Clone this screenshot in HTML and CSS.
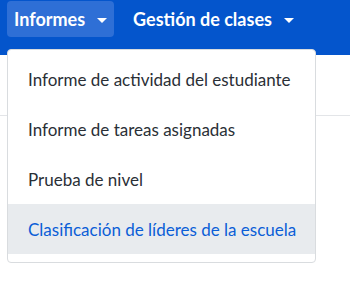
FILE: index.html
```html
<!DOCTYPE html>
<html lang="es">
<head>
    <meta charset="UTF-8">
    <meta name="viewport" content="width=device-width, initial-scale=1.0">
    <title>Informes</title>
    <link rel="stylesheet" href="styles.css">
</head>
<body>

    <!-- barra superior -->
    <nav class="topbar">
        <button class="nav-btn active">Informes <span class="caret"></span></button>
        <button class="nav-btn">Gestión de clases <span class="caret"></span></button>
    </nav>

    <!-- contenido de la página (tapado por el menú) -->
    <div class="page-head"></div>

    <!-- menú desplegable -->
    <ul class="dropdown">
        <li class="dropdown-item">Informe de actividad del estudiante</li>
        <li class="dropdown-item">Informe de tareas asignadas</li>
        <li class="dropdown-item">Prueba de nivel</li>
        <li class="dropdown-item selected">Clasificación de líderes de la escuela</li>
    </ul>

</body>
</html>
```

FILE: styles.css
```css
body {
    margin: 0;
    font-family: Lato, "Open Sans", sans-serif;
    background: white;
}

.topbar {
    height: 55px;
    background: #0455cc;
    display: flex;
    align-items: flex-start;
    padding: 1px 0 0 7px;
    gap: 12px;
    box-sizing: border-box;
}

.nav-btn {
    height: 36px;
    padding: 0 7px;
    display: flex;
    align-items: center;
    gap: 12px;
    font-family: inherit;
    font-size: 18px;
    font-weight: 700;
    color: white;
    background: transparent;
    border: none;
    border-radius: 4px;
}

.nav-btn.active {
    background: #2e6fd6;
}

.caret {
    width: 0;
    height: 0;
    border-left: 5px solid transparent;
    border-right: 5px solid transparent;
    border-top: 5px solid white;
    margin-top: 2px;
}

.page-head {
    height: 60px;
    border-bottom: 1px solid #e3e5e8;
}

.dropdown {
    position: absolute;
    top: 49px;
    left: 7px;
    list-style: none;
    margin: 0;
    padding: 4px 0 8px;
    width: 309px;
    box-sizing: border-box;
    border: 1px solid #d9dcdf;
    border-radius: 4px;
    background: white;
}

.dropdown-item {
    height: 50px;
    display: flex;
    align-items: center;
    padding-left: 20px;
    font-size: 17px;
    color: #2a2f36;
}

.dropdown-item.selected {
    background: #e8ebee;
    color: #0b5ed7;
}
```
